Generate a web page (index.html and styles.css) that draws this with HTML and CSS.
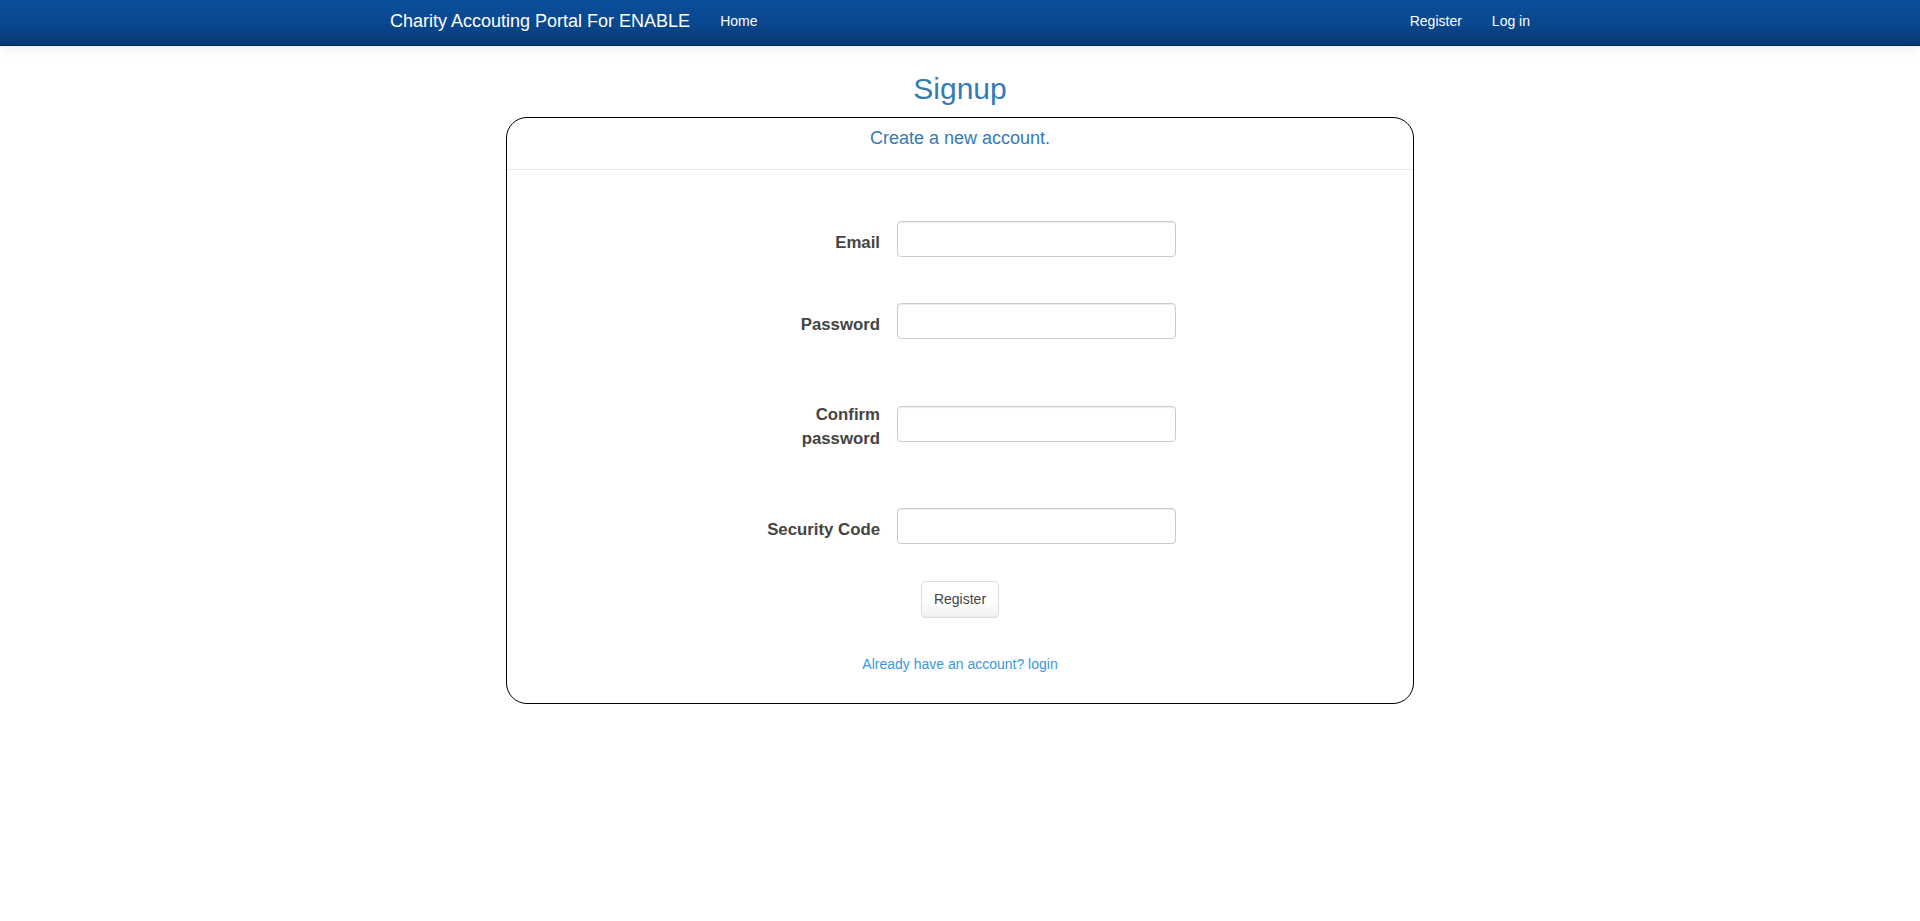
FILE: index.html
```html
<!DOCTYPE html>
<html lang="en">
<head>
<meta charset="utf-8">
<title>Signup</title>
<link rel="stylesheet" href="styles.css">
</head>
<body>
<header class="navbar">
  <div class="nav-inner">
    <a class="brand" href="#">Charity Accouting Portal For ENABLE</a>
    <nav class="nav-left"><a href="#">Home</a></nav>
    <nav class="nav-right"><a href="#">Register</a><a href="#">Log in</a></nav>
  </div>
</header>
<main class="page">
  <h2 class="title">Signup</h2>
  <section class="card">
    <div class="card-header">Create a new account.</div>
    <form class="card-body">
      <div class="form-row row-first">
        <label class="label" for="email">Email</label>
        <input class="input" id="email" type="email">
      </div>
      <div class="form-row">
        <label class="label" for="pw">Password</label>
        <input class="input" id="pw" type="password">
      </div>
      <div class="form-row">
        <label class="label" for="cpw">Confirm password</label>
        <input class="input" id="cpw" type="password">
      </div>
      <div class="form-row row-last">
        <label class="label" for="code">Security Code</label>
        <input class="input" id="code" type="text">
      </div>
      <div class="actions"><button class="btn" type="button">Register</button></div>
      <p class="login-link"><a href="#">Already have an account? login</a></p>
    </form>
  </section>
</main>
</body>
</html>
```

FILE: styles.css
```css
* { box-sizing: border-box; }
html, body { margin: 0; padding: 0; }
body {
  font-family: "Liberation Sans", Arial, sans-serif;
  font-size: 14px;
  line-height: 20px;
  color: #333;
  background: #fff;
}
a { text-decoration: none; }

.navbar {
  height: 46px;
  background: linear-gradient(to bottom, #0a4e9a 0%, #09488f 50%, #073971 100%);
  border-bottom: 1px solid #03264f;
  box-shadow: 0 2px 10px rgba(0, 0, 0, 0.09);
}
.nav-inner {
  width: 1170px;
  margin: 0 auto;
  display: flex;
  align-items: flex-start;
  padding: 11px 0 0 15px;
}
.brand {
  color: #fff;
  font-size: 18px;
  line-height: 20px;
}
.nav-left { margin-left: 30px; display: flex; }
.nav-right { margin-left: auto; display: flex; gap: 30px; padding-right: 15px; }
.nav-left a, .nav-right a {
  color: #fff;
  font-size: 14px;
  line-height: 20px;
}

.page { padding-top: 26px; }
.title {
  margin: 0 0 12px;
  text-align: center;
  font-size: 30px;
  line-height: 33px;
  font-weight: normal;
  color: #337ab7;
}
.card {
  width: 908px;
  margin: 0 auto;
  border: 1px solid #000;
  border-radius: 21px;
}
.card-header {
  padding: 10px 0 21px;
  text-align: center;
  font-size: 18px;
  line-height: 20px;
  color: #337ab7;
  border-bottom: 1px solid #e8e8e8;
}
.card-body {
  padding: 51px 0 29px;
  margin: 0;
}
.form-row {
  display: flex;
  align-items: center;
  padding-left: 253px;
  margin-bottom: 57px;
}
.row-first { margin-bottom: 46px; }
.row-last { margin-bottom: 37px; }
.label {
  width: 137px;
  padding: 7px 17px 0 0;
  text-align: right;
  font-weight: bold;
  font-size: 16.8px;
  line-height: 24px;
  color: #444;
}
.input {
  width: 279px;
  height: 36px;
  margin: 0;
  padding: 6px 12px;
  border: 1px solid #ccc;
  border-radius: 4px;
  background: #fff;
  box-shadow: inset 0 1px 1px rgba(0, 0, 0, 0.075);
  font: inherit;
}
.actions { display: flex; justify-content: center; }
.btn {
  padding: 8px 12px;
  font-family: "Liberation Sans", Arial, sans-serif;
  font-size: 14px;
  line-height: 19px;
  color: #444;
  background: linear-gradient(to bottom, #fff 0%, #fff 55%, #f0f0f0 100%);
  border: 1px solid #ddd;
  border-radius: 4px;
}
.login-link {
  margin: 36px 0 0;
  text-align: center;
  font-size: 14px;
  line-height: 20px;
}
.login-link a { color: #3a97e0; }
```
